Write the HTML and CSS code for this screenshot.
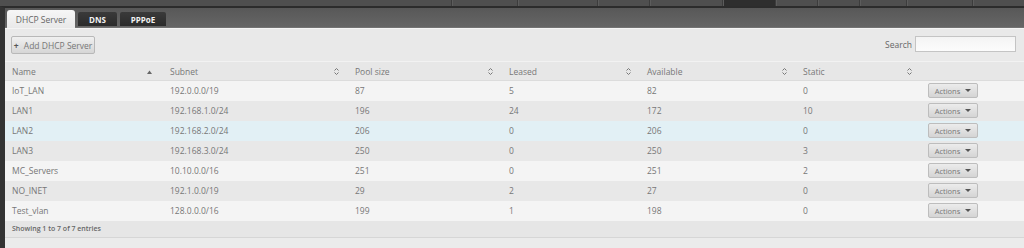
FILE: index.html
```html
<!DOCTYPE html>
<html lang="en">
<head>
    <meta charset="UTF-8">
    <meta name="viewport" content="width=device-width, initial-scale=1.0">
    <title>DHCP Server</title>
    <link rel="stylesheet" href="styles.css">
</head>
<body>
    <div class="topnav">
        <span class="topnav-fill"></span>
        <span class="topnav-tab w66"></span>
        <span class="topnav-tab w80"></span>
        <span class="topnav-tab w52"></span>
        <span class="topnav-tab w73"></span>
        <span class="topnav-tab w53 active"></span>
        <span class="topnav-tab w42"></span>
        <span class="topnav-tab w42"></span>
        <span class="topnav-tab w47"></span>
        <span class="topnav-tab w66"></span>
        <span class="topnav-rest"></span>
    </div>

    <div class="frame">
        <div class="subnav">
            <a class="subtab active">DHCP Server</a>
            <a class="subtab">DNS</a>
            <a class="subtab">PPPoE</a>
        </div>

        <div class="panel">
            <div class="toolbar">
                <button class="btn"><span class="plus">+</span> Add DHCP Server</button>
                <label class="search">Search <input type="text"></label>
            </div>

            <table class="grid">
                <colgroup>
                    <col style="width: 158px">
                    <col style="width: 185px">
                    <col style="width: 154px">
                    <col style="width: 138px">
                    <col style="width: 156px">
                    <col style="width: 125px">
                    <col>
                </colgroup>
                <thead>
                    <tr>
                        <th>Name <span class="sort asc"></span></th>
                        <th>Subnet <span class="sort"></span></th>
                        <th>Pool size <span class="sort"></span></th>
                        <th>Leased <span class="sort"></span></th>
                        <th>Available <span class="sort"></span></th>
                        <th>Static <span class="sort"></span></th>
                        <th></th>
                    </tr>
                </thead>
                <tbody id="servers"></tbody>
            </table>

            <div class="footer">Showing 1 to 7 of 7 entries</div>
        </div>
    </div>

    <script>
        const servers = [
            ['IoT_LAN', '192.0.0.0/19', 87, 5, 82, 0],
            ['LAN1', '192.168.1.0/24', 196, 24, 172, 10],
            ['LAN2', '192.168.2.0/24', 206, 0, 206, 0],
            ['LAN3', '192.168.3.0/24', 250, 0, 250, 3],
            ['MC_Servers', '10.10.0.0/16', 251, 0, 251, 2],
            ['NO_INET', '192.1.0.0/19', 29, 2, 27, 0],
            ['Test_vlan', '128.0.0.0/16', 199, 1, 198, 0]
        ];

        const sortIcon = '<svg width="5" height="7" viewBox="0 0 5 7"><path d="M0.5 2.5 L2.5 0.5 L4.5 2.5 M0.5 4.5 L2.5 6.5 L4.5 4.5" fill="none" stroke="#777" stroke-width="1"/></svg>';
        const ascIcon = '<svg width="5" height="4" viewBox="0 0 5 4"><path d="M0 4 L2.5 0.5 L5 4 Z" fill="#666"/></svg>';

        document.querySelectorAll('.sort').forEach(el => {
            el.innerHTML = el.classList.contains('asc') ? ascIcon : sortIcon;
        });

        const tbody = document.getElementById('servers');
        servers.forEach((s, i) => {
            const row = document.createElement('tr');
            if (i === 2) row.className = 'hover';
            row.innerHTML = `
                <td>${s[0]}</td>
                <td>${s[1]}</td>
                <td>${s[2]}</td>
                <td>${s[3]}</td>
                <td>${s[4]}</td>
                <td>${s[5]}</td>
                <td><button class="actions">Actions <span class="caret"></span></button></td>
            `;
            tbody.appendChild(row);
        });
    </script>
</body>
</html>
```

FILE: styles.css
```css
* {
    box-sizing: border-box;
    margin: 0;
    padding: 0;
}

body {
    font-family: 'Open Sans', 'Noto Sans', sans-serif;
    font-size: 8.5px;
    color: #777;
    background-color: #ebebeb;
    height: 248px;
    overflow: hidden;
}

/* top level nav, mostly scrolled out of view */
.topnav {
    display: flex;
    height: 6px;
    background-color: #4f4f4f;
}

.topnav-fill {
    width: 452px;
    border-right: 1px solid #3c3c3c;
}

.topnav-tab {
    border-right: 1px solid #3c3c3c;
    border-left: 1px solid #5c5c5c;
}

.topnav-tab.active {
    background-color: #2e2e2e;
}

.topnav-rest {
    flex: 1;
    border-left: 1px solid #5c5c5c;
}

.w42 { width: 42px; }
.w47 { width: 47px; }
.w52 { width: 52px; }
.w53 { width: 53px; }
.w66 { width: 66px; }
.w73 { width: 73px; }
.w80 { width: 80px; }

.frame {
    border-top: 2px solid #2c2c2c;
    border-left: 5px solid #333;
    height: 242px;
}

.subnav {
    display: flex;
    align-items: flex-end;
    gap: 3px;
    height: 20px;
    padding-left: 2px;
    background: linear-gradient(#585858, #656565);
    border-bottom: 1px solid #737373;
}

.subtab {
    display: flex;
    align-items: center;
    justify-content: center;
    height: 14px;
    margin-bottom: 1px;
    color: #f2f2f2;
    font-weight: bold;
    font-size: 8px;
    background: linear-gradient(#3a3a3a, #2b2b2b);
    border-radius: 2px 2px 0 0;
}

.subtab:nth-child(2) { width: 39px; }
.subtab:nth-child(3) { width: 46px; }

.subtab.active {
    width: 68px;
    height: 18px;
    margin-bottom: -1px;
    color: #666;
    font-weight: normal;
    font-size: 8.5px;
    background: linear-gradient(#f6f6f6, #e9e9e9);
    border-radius: 3px 3px 0 0;
}

.panel {
    background-color: #e9e9e9;
    border-top: 1px solid #f4f4f4;
}

.toolbar {
    display: flex;
    justify-content: space-between;
    align-items: flex-start;
    padding: 7px 8px 0 6px;
    height: 32px;
}

.btn {
    height: 18px;
    width: 84px;
    font: inherit;
    color: #777;
    background: linear-gradient(#f0f0f0, #d6d6d6);
    border: 1px solid #b8b8b8;
    border-radius: 2px;
}

.plus {
    font-weight: bold;
    color: #555;
    margin-right: 3px;
}

.search {
    display: flex;
    align-items: center;
    gap: 3px;
    height: 16px;
    color: #666;
}

.search input {
    width: 101px;
    height: 16px;
    border: 1px solid #c4c4c4;
    background: linear-gradient(#f4f4f4, #fcfcfc);
}

.grid {
    width: 100%;
    table-layout: fixed;
    border-collapse: collapse;
}

.grid th,
.grid td {
    height: 20px;
    padding: 0 7px;
    text-align: left;
    font-weight: normal;
    white-space: nowrap;
}

.grid th {
    position: relative;
    height: 19px;
    border-top: 1px solid #f2f2f2;
    border-bottom: 1px solid #dcdcdc;
    background-color: #e7e7e7;
}

.sort {
    position: absolute;
    right: 9px;
    top: 6px;
    line-height: 0;
}

.sort.asc {
    top: 8px;
    right: 11px;
}

.grid tbody tr {
    background-color: #f4f4f4;
}

.grid tbody tr:nth-child(even) {
    background-color: #e8e8e8;
}

.grid tbody tr.hover {
    background-color: #e2f0f5;
}

.actions {
    display: flex;
    align-items: center;
    justify-content: center;
    gap: 5px;
    width: 50px;
    height: 15px;
    font: inherit;
    font-size: 7.5px;
    color: #777;
    background: linear-gradient(#ececec, #d4d4d4);
    border: 1px solid #bdbdbd;
    border-radius: 2px;
}

.caret {
    width: 0;
    height: 0;
    border-left: 3px solid transparent;
    border-right: 3px solid transparent;
    border-top: 3px solid #555;
}

.footer {
    height: 17px;
    padding: 3px 7px 0;
    font-size: 7px;
    font-weight: 600;
    color: #666;
    background-color: #e6e6e6;
    border-bottom: 1px solid #d6d6d6;
}
```
